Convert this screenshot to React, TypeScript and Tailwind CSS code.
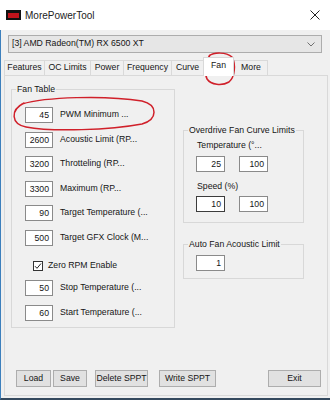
import React from "react";

type Row = { v: string; label: string };

const TOP_ROWS: Row[] = [
  { v: "45", label: "PWM Minimum ..." },
  { v: "2600", label: "Acoustic Limit (RP..." },
  { v: "3200", label: "Throtteling (RP..." },
  { v: "3300", label: "Maximum (RP..." },
  { v: "90", label: "Target Temperature (..." },
  { v: "500", label: "Target GFX Clock (M..." },
];

const BOTTOM_ROWS: Row[] = [
  { v: "50", label: "Stop Temperature (..." },
  { v: "60", label: "Start Temperature (..." },
];

const TABS = [
  { name: "Features", w: "w-[40px]" },
  { name: "OC Limits", w: "w-[46px]" },
  { name: "Power", w: "w-[33px]" },
  { name: "Frequency", w: "w-[48px]" },
  { name: "Curve", w: "w-[32px]" },
  { name: "Fan", w: "w-[31px]", active: true },
  { name: "More", w: "w-[34px]", last: true },
];

function TextBox({ v, w = "w-[28px]", dark }: { v: string; w?: string; dark?: boolean }) {
  return (
    <div
      className={`${w} h-[16px] shrink-0 bg-white border ${
        dark ? "border-[#3c3c3c]" : "border-[#8a8a8a]"
      } text-right pr-[3px] leading-[14px]`}
    >
      {v}
    </div>
  );
}

function Group({
  title,
  className,
  children,
}: {
  title: string;
  className: string;
  children: React.ReactNode;
}) {
  return (
    <div className={`relative border border-[#d8d8d8] ${className}`}>
      <span className="absolute -top-[6px] left-[4px] px-[1px] bg-[#f0f0f0] leading-[11px] whitespace-nowrap">
        {title}
      </span>
      {children}
    </div>
  );
}

function Btn({ label, w, className = "" }: { label: string; w: string; className?: string }) {
  return (
    <div
      className={`${w} h-[17px] bg-[#e1e1e1] border border-[#adadad] flex items-center justify-center whitespace-nowrap ${className}`}
    >
      {label}
    </div>
  );
}

export default function App() {
  return (
    <div className="relative w-[330px] h-[400px] overflow-hidden flex flex-col bg-[#f0f0f0] text-[8.7px] text-[#151515] font-['Liberation_Sans',Arial,sans-serif]">
      {/* title bar */}
      <div className="h-[30px] shrink-0 bg-white flex items-center pl-[6px] pr-[10px]">
        <svg width="15" height="10" viewBox="0 0 15 10">
          <rect width="15" height="10" fill="#111" />
          <rect x="2" y="3" width="11" height="5" fill="#c0141c" />
        </svg>
        <span className="ml-[4px] text-[10px] text-[#222]">MorePowerTool</span>
        <svg className="ml-auto" width="10" height="10" viewBox="0 0 10 10">
          <path d="M0.5 0.5 L9.5 9.5 M9.5 0.5 L0.5 9.5" stroke="#222" strokeWidth="1" />
        </svg>
      </div>

      {/* body */}
      <div className="flex-1 flex flex-col border-l border-[#3d80bd] border-b-2 border-b-[#34495e]">
        {/* combo */}
        <div className="ml-[7px] mt-[5px] w-[314px] h-[18px] bg-[#e6e6e6] border border-[#adadad] flex items-center pl-[3px] pr-[6px]">
          <span>[3] AMD Radeon(TM) RX 6500 XT</span>
          <svg className="ml-auto" width="8" height="5" viewBox="0 0 8 5">
            <path d="M0.5 0.5 L4 4 L7.5 0.5" fill="none" stroke="#707070" strokeWidth="1" />
          </svg>
        </div>

        {/* tabs */}
        <div className="ml-[3px] mt-[4px] h-[18px] flex items-end">
          {TABS.map((t) =>
            t.active ? (
              <div
                key={t.name}
                className={`${t.w} h-[19px] -mb-px relative z-10 bg-white border border-b-0 border-[#d9d9d9] flex items-center justify-center pb-[2px]`}
              >
                {t.name}
              </div>
            ) : (
              <div
                key={t.name}
                className={`${t.w} h-[15px] border-t border-l ${
                  t.last ? "border-r" : ""
                } border-[#d9d9d9] flex items-center justify-center`}
              >
                {t.name}
              </div>
            )
          )}
        </div>

        {/* tab page */}
        <div className="flex-1 mb-[2px] ml-[3px] w-[324px] border border-[#d9d9d9] flex flex-col">
          <div className="flex items-start">
            <Group title="Fan Table" className="ml-[6px] mt-[13px] w-[164px] h-[239px] pl-[13px] pt-[17px]">
              <div className="flex flex-col gap-[8.5px]">
                {TOP_ROWS.map((r) => (
                  <div key={r.label} className="flex items-center gap-[7px]">
                    <TextBox v={r.v} />
                    <span className="whitespace-nowrap">{r.label}</span>
                  </div>
                ))}
              </div>
              <div className="mt-[15.5px] ml-[8px] flex items-center gap-[5px] h-[10px]">
                <div className="w-[10px] h-[10px] bg-white border border-[#333] flex items-center justify-center">
                  <svg width="8" height="8" viewBox="0 0 8 8">
                    <path d="M1 4.2 L3 6.3 L7 1.5" fill="none" stroke="#222" strokeWidth="1" />
                  </svg>
                </div>
                <span>Zero RPM Enable</span>
              </div>
              <div className="mt-[9px] flex flex-col gap-[8.5px]">
                {BOTTOM_ROWS.map((r) => (
                  <div key={r.label} className="flex items-center gap-[7px]">
                    <TextBox v={r.v} />
                    <span className="whitespace-nowrap">{r.label}</span>
                  </div>
                ))}
              </div>
            </Group>

            <div className="ml-[8px] flex flex-col">
              <Group title="Overdrive Fan Curve Limits" className="mt-[54px] w-[121px] h-[93px] pl-[12px] pt-[9px]">
                <div className="ml-[1px] leading-[11px]">Temperature (°...</div>
                <div className="mt-[5px] flex gap-[14px]">
                  <TextBox v="25" w="w-[29px]" />
                  <TextBox v="100" w="w-[29px]" />
                </div>
                <div className="mt-[9px] ml-[1px] leading-[11px]">Speed (%)</div>
                <div className="mt-[4px] flex gap-[14px]">
                  <TextBox v="10" w="w-[29px]" dark />
                  <TextBox v="100" w="w-[29px]" />
                </div>
              </Group>
              <Group title="Auto Fan Acoustic Limit" className="mt-[21px] w-[121px] h-[35px] pl-[12px] pt-[10px]">
                <TextBox v="1" w="w-[29px]" />
              </Group>
            </div>
          </div>

          {/* buttons */}
          <div className="mt-[42px] ml-[11px] mr-[6px] flex">
            <Btn label="Load" w="w-[35px]" />
            <Btn label="Save" w="w-[34px]" className="ml-[2px]" />
            <Btn label="Delete SPPT" w="w-[53px]" className="ml-[8px]" />
            <Btn label="Write SPPT" w="w-[57px]" className="ml-[11px]" />
            <Btn label="Exit" w="w-[53px]" className="ml-auto" />
          </div>
        </div>
      </div>

      {/* red hand-drawn annotations */}
      <svg className="absolute left-0 top-0 pointer-events-none" width="330" height="400" viewBox="0 0 330 400">
        <path
          d="M209 56 C214 52, 226 52, 232 57 C236 64, 235 77, 229 82 C222 86, 211 85, 207 79 C204 72, 205 62, 210 55"
          fill="none"
          stroke="#d0202a"
          strokeWidth="1.5"
          strokeLinecap="round"
        />
        <path
          d="M22 104 C45 97, 105 95, 142 101 C158 105, 158 119, 142 124 C110 130, 52 132, 26 127 C11 124, 10 110, 24 103"
          fill="none"
          stroke="#d0202a"
          strokeWidth="1.5"
          strokeLinecap="round"
        />
      </svg>
    </div>
  );
}
